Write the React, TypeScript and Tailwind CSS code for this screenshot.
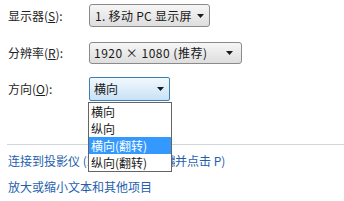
import React from "react";

const font = { fontFamily: '"Noto Sans CJK SC", "Noto Sans", sans-serif' };

function Arrow() {
  return (
    <svg width="7" height="4" viewBox="0 0 7 4" className="shrink-0">
      <path d="M0 0 H7 L3.5 4 Z" fill="#1a1a1a" />
    </svg>
  );
}

function Label({ text, k }: { text: string; k: string }) {
  return (
    <div className="w-[81px] shrink-0 text-[12px] leading-[16px] text-[#1e1e1e]">
      {text}(<span className="underline">{k}</span>):
    </div>
  );
}

export default function App() {
  return (
    <div
      className="relative w-[344px] h-[201px] overflow-hidden bg-white pt-[4px]"
      style={font}
    >
      <div className="pl-[8px]">
        <div className="flex items-center h-[23px]">
          <Label text="显示器" k="S" />
          <div className="flex items-center justify-between w-[121px] h-[23px] rounded-[3px] border border-[#8a8a8a] bg-gradient-to-b from-[#f6f6f6] to-[#dedede] pl-[5px] pr-[5px] text-[12px] leading-[16px] text-[#1a1a1a]">
            <span className="tracking-[0.3px]">1. 移动 PC 显示屏</span>
            <Arrow />
          </div>
        </div>
        <div className="flex items-center h-[22px] mt-[15px]">
          <Label text="分辨率" k="R" />
          <div className="flex items-center justify-between w-[153px] h-[22px] rounded-[3px] border border-[#8a8a8a] bg-gradient-to-b from-[#f6f6f6] to-[#dedede] pl-[4px] pr-[8px] text-[12px] leading-[16px] text-[#1a1a1a]">
            <span className="tracking-[0.5px]">1920 × 1080 (推荐)</span>
            <Arrow />
          </div>
        </div>
        <div className="flex items-center h-[24px] mt-[13px]">
          <Label text="方向" k="O" />
          <div className="relative w-[81px] h-[24px]">
            <div className="flex items-center justify-between w-full h-full rounded-[2px] border border-[#3c7fb1] bg-gradient-to-b from-[#f2f8fd] to-[#c8e2f6] pl-[4px] pr-[5px] text-[12px] leading-[16px] text-[#1a1a1a]">
              <span>横向</span>
              <Arrow />
            </div>
            <div className="absolute left-[-1px] top-[25px] z-10 w-[84px] border border-[#646464] bg-white text-[12px] leading-[17px] text-[#1a1a1a]">
              <div className="h-[17px] pl-[2px]">横向</div>
              <div className="h-[17px] pl-[2px]">纵向</div>
              <div className="h-[17px] pl-[2px] bg-[#3399ff] text-white">横向(翻转)</div>
              <div className="h-[17px] pl-[2px]">纵向(翻转)</div>
            </div>
          </div>
        </div>
      </div>
      <div className="ml-[7px] mt-[43px] border-t border-[#cfd6db]" />
      <div className="flex pl-[8px] mt-[8px] text-[12px] leading-[16px] text-[#1f5fae] whitespace-nowrap">
        <span className="w-[167px] shrink-0 overflow-hidden">连接到投影仪 (或按 Windows 徽标键</span>
        <span>并点击 P)</span>
      </div>
      <div className="pl-[8px] mt-[10px] text-[12px] leading-[16px] text-[#1f5fae] whitespace-nowrap">
        放大或缩小文本和其他项目
      </div>
    </div>
  );
}
